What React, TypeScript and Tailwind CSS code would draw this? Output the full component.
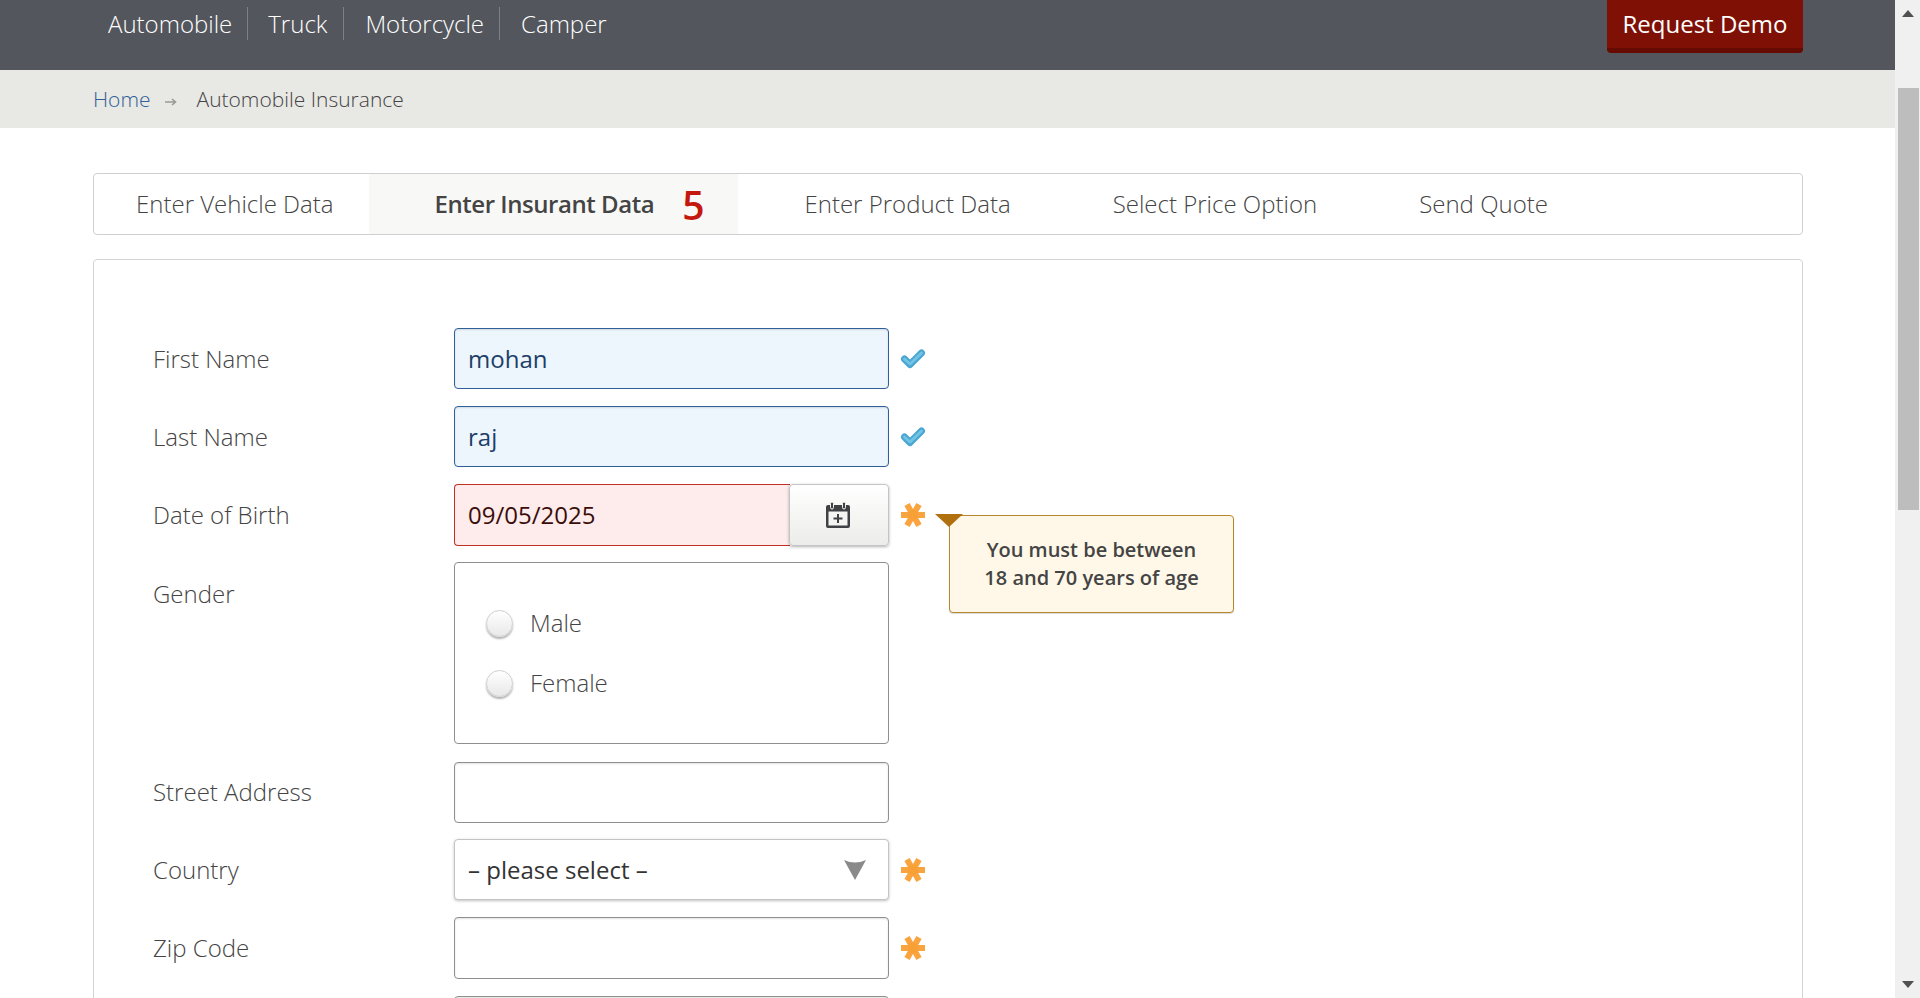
import React from "react";

const Asterisk = () => (
  <svg width="26" height="26" viewBox="0 0 26 26" className="shrink-0">
    <g stroke="#f9a43e" strokeWidth="6" strokeLinecap="butt">
      <line x1="1" y1="13" x2="25" y2="13" />
      <line x1="7" y1="2.5" x2="19" y2="23.5" />
      <line x1="19" y1="2.5" x2="7" y2="23.5" />
    </g>
    <circle cx="13" cy="13" r="5" fill="#f7a035" />
  </svg>
);

const Check = () => (
  <svg width="26" height="22" viewBox="0 0 26 22" className="shrink-0">
    <path d="M4.5 11 L10 16.5 L21.5 5" fill="none" stroke="#4aa6d2" strokeWidth="7" strokeLinecap="round" strokeLinejoin="round" />
    <path d="M4.5 11 L10 16 L21.5 5" fill="none" stroke="#72c3e4" strokeWidth="3" strokeLinecap="round" strokeLinejoin="round" />
  </svg>
);

const Calendar = () => (
  <svg width="26" height="28" viewBox="0 0 26 28">
    <path d="M3 4 H23 A2 2 0 0 1 25 6 V25 A2 2 0 0 1 23 27 H3 A2 2 0 0 1 1 25 V6 A2 2 0 0 1 3 4 Z" fill="#3f4145" />
    <rect x="3.5" y="10.5" width="19" height="14" fill="#f4f4f2" />
    <rect x="5.5" y="1" width="3" height="7" rx="1.5" fill="#3f4145" stroke="#f4f4f2" strokeWidth="1" />
    <rect x="17.5" y="1" width="3" height="7" rx="1.5" fill="#3f4145" stroke="#f4f4f2" strokeWidth="1" />
    <path d="M13 13 V22 M8.5 17.5 H17.5" stroke="#3f4145" strokeWidth="2" />
  </svg>
);

const Radio = ({ label }: { label: string }) => (
  <div className="flex items-center h-[28px]">
    <span className="w-[27px] h-[27px] rounded-full border border-[#cfcfcf] bg-[linear-gradient(#ffffff,#e8e8e8)] shadow-[0_2px_2px_rgba(0,0,0,0.3)]" />
    <span className="ml-[17px] text-[24px] font-light text-[#444]">{label}</span>
  </div>
);

const Label = ({ children }: { children?: React.ReactNode }) => (
  <div className="w-[301px] shrink-0 h-[61px] flex items-center text-[24px] font-light text-[#444]">{children}</div>
);

const inputBase = "w-[435px] h-[61px] rounded-[4px] px-[13px] text-[24px] outline-none shadow-[inset_0_1px_2px_rgba(0,0,0,0.12)]";

export default function App() {
  return (
    <div className="flex w-[1920px] h-[998px] overflow-hidden bg-white font-['Open_Sans',sans-serif]">
      <div className="w-[1895px] shrink-0">
        <div className="h-[70px] bg-[#53565c] flex items-start justify-between pl-[108px] pr-[92px]">
          <div className="flex pt-[7px] text-[24px] font-light text-white">
            <span className="h-[33px] leading-[33px] pr-[15px] border-r border-[#7d8086]">Automobile</span>
            <span className="h-[33px] leading-[33px] pl-[20px] pr-[16px] border-r border-[#7d8086]">Truck</span>
            <span className="h-[33px] leading-[33px] pl-[21px] pr-[15px] border-r border-[#7d8086]">Motorcycle</span>
            <span className="h-[33px] leading-[33px] pl-[21px]">Camper</span>
          </div>
          <div className="w-[196px] h-[53px] bg-[#7f1005] border-b-[5px] border-[#650b02] rounded-b-[4px] text-white text-[24px] text-center leading-[47px]">
            Request Demo
          </div>
        </div>

        <div className="h-[58px] bg-[#e8e8e4] flex items-center pl-[93px] pt-[1px] text-[21px] font-light">
          <span className="text-[#2f6098]">Home</span>
          <svg width="12" height="10" viewBox="0 0 12 10" className="ml-[14px] mt-[5px]">
            <path d="M0 5 H10 M7 2 L10.5 5 L7 8" fill="none" stroke="#999" strokeWidth="1.6" />
          </svg>
          <span className="ml-[20px] text-[#444]">Automobile Insurance</span>
        </div>

        <div className="ml-[93px] mr-[92px] mt-[45px] h-[62px] border border-[#cfcfcf] rounded-[4px] flex items-stretch text-[24px] font-light text-[#444]">
          <div className="flex items-center pl-[42px] pr-[36px]">Enter Vehicle Data</div>
          <div className="w-[369px] bg-[#f8f8f6] flex items-center pl-[65px] font-semibold tracking-[-0.45px] text-[#444]">
            <span>Enter Insurant Data</span>
            <span className="ml-[28px] text-[39px] font-semibold tracking-normal text-[#c4170d] leading-none">5</span>
          </div>
          <div className="flex items-center pl-[66px] pr-[51px]">Enter Product Data</div>
          <div className="flex items-center px-[51px]">Select Price Option</div>
          <div className="flex items-center px-[51px]">Send Quote</div>
        </div>

        <div className="relative ml-[93px] mr-[92px] mt-[24px] h-[800px] border border-[#d4d4d4] rounded-[4px] pl-[59px] pt-[68px] flex flex-col gap-[17px]">
          <div className="flex items-center">
            <Label>First Name</Label>
            <input readOnly value="mohan" className={`${inputBase} border border-[#2f6098] bg-[#edf5fd] text-[#1c3f68]`} />
            <span className="ml-[11px]"><Check /></span>
          </div>
          <div className="flex items-center">
            <Label>Last Name</Label>
            <input readOnly value="raj" className={`${inputBase} border border-[#2f6098] bg-[#edf5fd] text-[#1c3f68]`} />
            <span className="ml-[11px]"><Check /></span>
          </div>
          <div className="flex items-center">
            <Label>Date of Birth</Label>
            <div className="w-[435px] h-[61px] flex">
              <input readOnly value="09/05/2025" className="w-[336px] h-[62px] rounded-l-[4px] border border-r-0 border-[#c22f25] bg-[#fdeceb] px-[13px] pb-[1px] text-[24px] text-[#3a0d0a] outline-none" />
              <div className="w-[100px] h-[62px] -ml-px pr-[2px] rounded-[4px] border border-[#c4c4c4] bg-[linear-gradient(#ffffff,#ececea)] shadow-[0_1px_3px_rgba(0,0,0,0.3)] flex items-center justify-center">
                <Calendar />
              </div>
            </div>
            <span className="ml-[11px]"><Asterisk /></span>
          </div>
          <div className="flex items-start mb-[1px]">
            <div className="pt-[1px]"><Label>Gender</Label></div>
            <div className="w-[435px] h-[182px] border border-[#8f8f8f] rounded-[4px] pl-[31px] pt-[46px] flex flex-col gap-[32px]">
              <Radio label="Male" />
              <Radio label="Female" />
            </div>
          </div>
          <div className="flex items-center -mb-px">
            <div className="-mt-[2px]"><Label>Street Address</Label></div>
            <input readOnly value="" className={`${inputBase} border border-[#8f8f8f] bg-white`} />
          </div>
          <div className="flex items-center">
            <Label>Country</Label>
            <div className="relative w-[435px] h-[61px] rounded-[4px] border border-[#c4c4c4] bg-white shadow-[0_1px_3px_rgba(0,0,0,0.25)] flex items-center pl-[13px] text-[24px] text-[#333]">
              – please select –
              <svg width="22" height="20" viewBox="0 0 22 20" className="absolute right-[22px] top-[20px]">
                <path d="M0 0 Q11 5 22 0 L11 20 Z" fill="#8a8a8a" />
              </svg>
            </div>
            <span className="ml-[11px] mt-[1px]"><Asterisk /></span>
          </div>
          <div className="flex items-center">
            <Label>Zip Code</Label>
            <input readOnly value="" className={`${inputBase} !h-[62px] border border-[#8f8f8f] bg-white`} />
            <span className="ml-[11px]"><Asterisk /></span>
          </div>
          <div className="flex items-center">
            <Label />
            <input readOnly value="" className={`${inputBase} border border-[#8f8f8f] bg-white`} />
          </div>

          <div className="absolute left-[855px] top-[255px] w-[285px] h-[98px] border border-[#b8862e] rounded-[4px] bg-[#fff8e8] shadow-[0_1px_1px_rgba(0,0,0,0.15)] flex items-center justify-center text-center text-[20px] leading-[28px] font-semibold text-[#444]">
            <span>You must be between<br />18 and 70 years of age</span>
          </div>
          <svg width="28" height="13" viewBox="0 0 28 13" className="absolute left-[841px] top-[254px]">
            <path d="M0 0 H28 L14 13 Z" fill="#b0700e" />
          </svg>
        </div>
      </div>

      <div className="w-[25px] shrink-0 bg-[#f0f0f0] flex flex-col items-center pl-[1px]">
        <svg width="12" height="7" viewBox="0 0 12 7" className="mt-[10px]"><path d="M0 7 L6 0 L12 7 Z" fill="#505050" /></svg>
        <div className="w-[21px] h-[422px] bg-[#bdbdbd] mt-[71px]" />
        <div className="grow" />
        <svg width="12" height="7" viewBox="0 0 12 7" className="mb-[10px]"><path d="M0 0 L6 7 L12 0 Z" fill="#505050" /></svg>
      </div>
    </div>
  );
}
